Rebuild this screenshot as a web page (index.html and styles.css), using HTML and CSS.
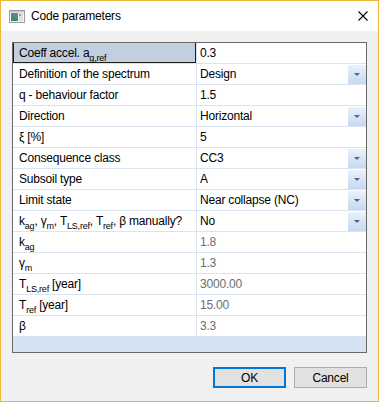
FILE: index.html
```html
<!DOCTYPE html>
<html>
<head>
<meta charset="utf-8">
<link rel="stylesheet" href="styles.css">
</head>
<body>
<div class="window">
  <div class="titlebar">
    <svg class="app-icon" width="16" height="13" viewBox="0 0 16 13">
      <defs>
        <linearGradient id="g1" x1="0" y1="0" x2="0" y2="1">
          <stop offset="0" stop-color="#5a8aa8"/>
          <stop offset="1" stop-color="#3f8a5a"/>
        </linearGradient>
      </defs>
      <rect x="0.5" y="0.5" width="15" height="12" fill="#f4f4f4" stroke="#9a9a9a"/>
      <rect x="1" y="1" width="14" height="1.5" fill="#c8c8c8"/>
      <rect x="2" y="3" width="7" height="8" fill="url(#g1)"/>
      <rect x="10" y="3" width="4" height="8" fill="#d9e3dc"/>
      <rect x="10" y="4" width="2" height="2" fill="#7fb08a"/>
    </svg>
    <span class="title">Code parameters</span>
    <svg class="close" width="10" height="10" viewBox="0 0 10 10">
      <path d="M0.5 0.5 L9.5 9.5 M9.5 0.5 L0.5 9.5" stroke="#000" stroke-width="1.1" fill="none"/>
    </svg>
  </div>
  <div class="content">
    <div class="grid">
      <div class="row">
        <div class="label selected">Coeff accel. a<sub>g,ref</sub></div>
        <div class="value">0.3</div>
      </div>
      <div class="row">
        <div class="label">Definition of the spectrum</div>
        <div class="value">Design<span class="drop"></span></div>
      </div>
      <div class="row">
        <div class="label">q - behaviour factor</div>
        <div class="value">1.5</div>
      </div>
      <div class="row">
        <div class="label">Direction</div>
        <div class="value">Horizontal<span class="drop"></span></div>
      </div>
      <div class="row">
        <div class="label">ξ [%]</div>
        <div class="value">5</div>
      </div>
      <div class="row">
        <div class="label">Consequence class</div>
        <div class="value">CC3<span class="drop"></span></div>
      </div>
      <div class="row">
        <div class="label">Subsoil type</div>
        <div class="value">A<span class="drop"></span></div>
      </div>
      <div class="row">
        <div class="label">Limit state</div>
        <div class="value">Near collapse (NC)<span class="drop"></span></div>
      </div>
      <div class="row">
        <div class="label">k<sub>ag</sub>, γ<sub>m</sub>, T<sub>LS,ref</sub>, T<sub>ref</sub>, β manually?</div>
        <div class="value">No<span class="drop"></span></div>
      </div>
      <div class="row">
        <div class="label">k<sub>ag</sub></div>
        <div class="value disabled">1.8</div>
      </div>
      <div class="row">
        <div class="label">γ<sub>m</sub></div>
        <div class="value disabled">1.3</div>
      </div>
      <div class="row">
        <div class="label">T<sub>LS,ref</sub> [year]</div>
        <div class="value disabled">3000.00</div>
      </div>
      <div class="row">
        <div class="label">T<sub>ref</sub> [year]</div>
        <div class="value disabled">15.00</div>
      </div>
      <div class="row">
        <div class="label">β</div>
        <div class="value disabled">3.3</div>
      </div>
      <div class="filler"></div>
    </div>
    <div class="buttons">
      <button class="btn default">OK</button>
      <button class="btn">Cancel</button>
    </div>
  </div>
</div>
</body>
</html>
```
FILE: styles.css
```css
* { box-sizing: border-box; }
html, body { margin: 0; padding: 0; }
body {
  width: 379px;
  height: 402px;
  font-family: "Segoe UI", "Liberation Sans", Arial, sans-serif;
  font-size: 12px;
  letter-spacing: -0.2px;
  color: #000;
}
.window {
  width: 379px;
  height: 402px;
  border: 1px solid #eeb73a;
  background: #f0f0f0;
  display: flex;
  flex-direction: column;
}
.titlebar {
  height: 30px;
  background: #fff;
  display: flex;
  align-items: center;
  padding-left: 8px;
  flex-shrink: 0;
}
.app-icon { flex-shrink: 0; }
.title {
  margin-left: 6px;
  font-size: 12px;
  flex: 1;
}
.close { margin-right: 10px; }
.content {
  flex: 1;
  padding: 11px 11px 0 11px;
  display: flex;
  flex-direction: column;
}
.grid {
  width: 355px;
  height: 311px;
  border: 1px solid #696969;
  background: #fff;
  display: flex;
  flex-direction: column;
}
.row {
  display: flex;
  height: 21px;
  border-bottom: 1px solid #dae4f1;
  flex-shrink: 0;
}
.label {
  width: 184px;
  border-right: 1px solid #dae4f1;
  padding-left: 6px;
  line-height: 20px;
  white-space: nowrap;
  overflow: hidden;
}
.label.selected {
  background: #c1cfde;
  box-shadow: inset -1px -1px 0 #1e1e1e, inset 1px 0 0 #1e1e1e;
}
.value {
  flex: 1;
  padding-left: 3px;
  line-height: 20px;
  position: relative;
  white-space: nowrap;
}
.value.disabled { color: #6d6d6d; }
sub {
  font-size: 9px;
  vertical-align: -4px;
  line-height: 0;
}
.drop {
  position: absolute;
  right: 0;
  top: 1px;
  width: 18px;
  height: 19px;
  background: linear-gradient(#eaf1fb, #c6d8f1);
  display: flex;
  align-items: center;
  justify-content: center;
}
.drop::after {
  content: "";
  border-left: 3px solid transparent;
  border-right: 3px solid transparent;
  border-top: 3px solid #4f6488;
}
.filler {
  flex: 1;
  background: #d5e2f1;
}
.buttons {
  display: flex;
  justify-content: flex-end;
  gap: 8px;
  margin-top: 14px;
}
.btn {
  width: 73px;
  height: 21px;
  font-family: inherit;
  font-size: 12px;
  letter-spacing: inherit;
  background: #e1e1e1;
  border: 1px solid #adadad;
  padding: 0;
  color: #000;
}
.btn.default {
  border: 2px solid #0078d7;
}
```
